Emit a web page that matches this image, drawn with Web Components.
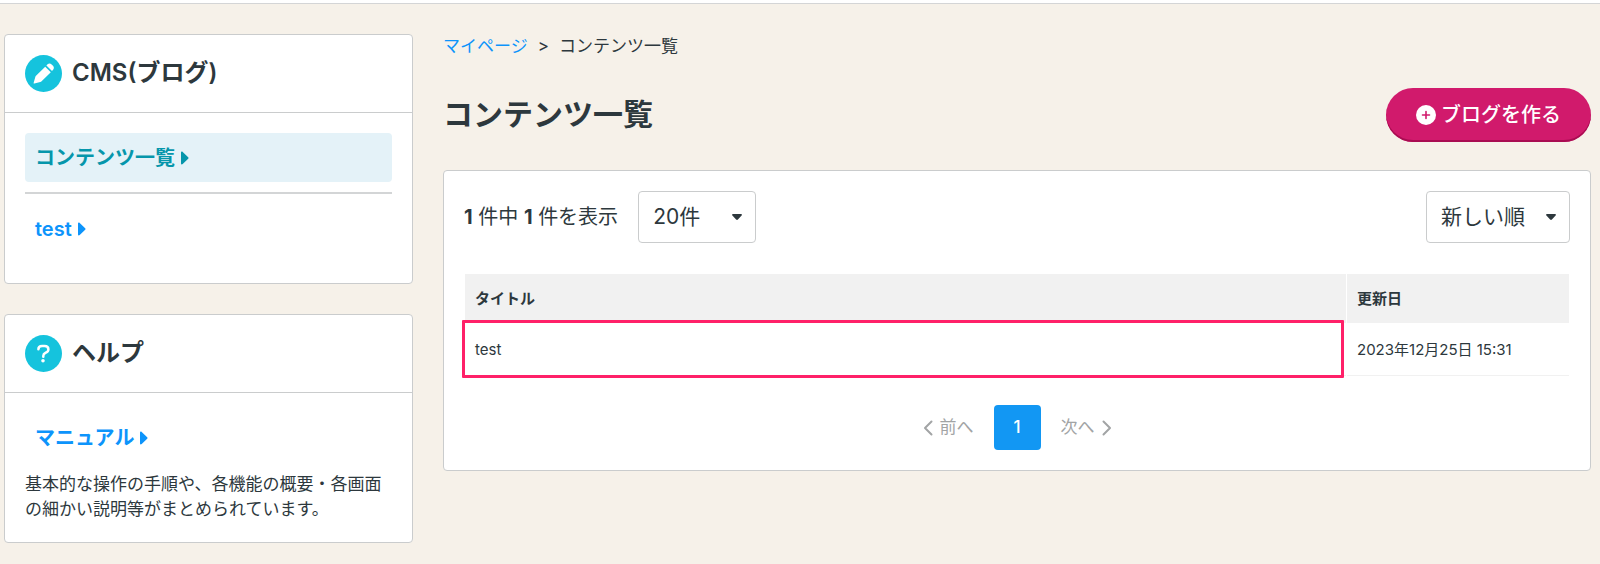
<!DOCTYPE html>
<html lang="ja">
<head>
<meta charset="utf-8">
<meta name="viewport" content="width=device-width, initial-scale=1">
<title>コンテンツ一覧</title>
<style>
body {
  margin: 0;
  background: #f6f1e9;
  color: #2d383d;
  font: 17px/25px Inter, "Noto Sans CJK JP", sans-serif;
  --line: #cacccd;
  --link: #0d94fb;
  --cyan: #15c3dd;
}
</style>
</head>
<body>
<cms-page>
  <side-card slot="side" icon="pencil" heading="CMS(ブログ)">
    <side-link href="#contents" current>コンテンツ一覧</side-link>
    <side-rule></side-rule>
    <side-link href="#test">test</side-link>
  </side-card>
  <side-card slot="side" icon="help" heading="ヘルプ">
    <side-link href="#manual">マニュアル</side-link>
    <side-text>基本的な操作の手順や、各機能の概要・各画面の細かい説明等がまとめられています。</side-text>
  </side-card>
  <bread-crumb parent="マイページ">コンテンツ一覧</bread-crumb>
  <page-title>コンテンツ一覧<round-button slot="action">ブログを作る</round-button></page-title>
  <content-panel></content-panel>
</cms-page>

<script>
const define = (name, markup, setup) => customElements.define(name, class extends HTMLElement {
  constructor() {
    super();
    const template = document.createElement('template');
    template.innerHTML = markup;
    this.attachShadow({ mode: 'open' }).append(template.content.cloneNode(true));
    if (setup) setup(this, this.shadowRoot);
  }
});

define('cms-page', `
<style>
  :host { display: block; }
  header { height: 3px; background: #fff; border-bottom: 1px solid #d4d5d6; }
  .columns { display: grid; grid-template-columns: minmax(240px, 409px) minmax(0, 1fr); gap: 30px; padding: 30px 9px 20px 4px; align-items: start; }
  aside { display: grid; gap: 30px; }
</style>
<header></header>
<div class="columns">
  <aside><slot name="side"></slot></aside>
  <main><slot></slot></main>
</div>`);

define('round-icon', `
<style>
  :host { display: block; width: 37px; height: 37px; }
  svg { display: none; width: 100%; height: 100%; }
  circle.disc { fill: var(--cyan); }
  :host([name="pencil"]) .pencil, :host([name="help"]) .help { display: block; }
</style>
<svg class="pencil" viewBox="0 0 37 37" aria-hidden="true">
  <circle class="disc" cx="18.5" cy="18.5" r="18.5"/>
  <path fill="#fff" d="M20.200 11.700l5.600 5.600-9.200 9c-.4.400-.8.600-1.300.8L9.300 28.600c-.500.100-.8-.2-.7-.7l1.700-5.900c.1-.5.4-.9.7-1.200zM21.400 10.500l1.200-1.200c1.200-1.200 2.900-1 4 .1l1.400 1.400c1.100 1.100 1.200 2.800.1 4L27 16.100z"/>
</svg>
<svg class="help" viewBox="0 0 37 37" aria-hidden="true">
  <circle class="disc" cx="18.5" cy="18.5" r="18.5"/>
  <path d="M13.400 14.300c0-2.200 1.500-3.300 3.600-3.300h2.600c2.300 0 3.800 1.500 3.800 3.400 0 1.800-1.200 2.600-2.600 3.300-1.500.8-2.500 1.500-2.500 3v1" fill="none" stroke="#fff" stroke-width="2.500" stroke-linecap="round" stroke-linejoin="round"/>
  <circle cx="18" cy="25.700" r="1.800" fill="#fff"/>
</svg>`);

define('side-card', `
<style>
  :host { display: block; background: #fff; border: 1px solid var(--line); border-radius: 4px; }
  header { display: flex; align-items: center; gap: 10px; padding: 20px; border-bottom: 1px solid var(--line); }
  h2 { margin: 0; font-size: 24px; line-height: 35px; padding-bottom: 2px; font-weight: 600; }
  .body { padding: 20px; }
</style>
<header><round-icon></round-icon><h2></h2></header>
<div class="body"><slot></slot></div>`, (host, root) => {
  root.querySelector('round-icon').setAttribute('name', host.getAttribute('icon'));
  root.querySelector('h2').textContent = host.getAttribute('heading');
});

define('side-link', `
<style>
  :host { display: block; margin-bottom: 10px; }
  a { display: flex; align-items: center; gap: 6px; padding: 11px 10px 9px; font-size: 20px; line-height: 29px; font-weight: 600; color: var(--link); text-decoration: none; border-radius: 4px; }
  :host([current]) a { background: #e4f2f8; color: #0596ab; }
  svg { width: 8px; height: 14px; margin-bottom: 2px; fill: currentColor; }
</style>
<a><slot></slot><svg viewBox="0 0 8 14" aria-hidden="true"><path d="M0 1.500C0 .4 1 .2 1.700.9l5.500 5.300c.5.500.5 1.100 0 1.600l-5.500 5.300C1 13.800 0 13.600 0 12.500z"/></svg></a>`,
(host, root) => { root.querySelector('a').href = host.getAttribute('href'); });

define('side-rule', `
<style>:host { display: block; } hr { margin: 0 0 10px; border: 0; border-top: 2px solid #d3d5d6; }</style><hr>`);

define('side-text', `
<style>:host { display: block; } p { margin: 0; }</style><p><slot></slot></p>`);

define('bread-crumb', `
<style>
  :host { display: block; }
  nav { display: flex; gap: 10px; }
  a { color: var(--link); text-decoration: none; }
</style>
<nav aria-label="パンくず"><a href="#mypage"></a><span>&gt;</span><span><slot></slot></span></nav>`,
(host, root) => { root.querySelector('a').textContent = host.getAttribute('parent'); });

define('page-title', `
<style>
  :host { display: flex; align-items: center; justify-content: space-between; margin: 29px 0 28px; }
  h1 { margin: 0; padding-bottom: 2px; font-size: 30px; line-height: 44px; font-weight: 700; }
</style>
<h1><slot></slot></h1><slot name="action"></slot>`);

define('round-button', `
<style>
  :host { display: block; }
  button { display: flex; align-items: center; gap: 5px; padding: 12px 30px; border: 0; border-radius: 27px; background: #d11a6c; box-shadow: inset 0 -2px #a90c52; color: #fff; font: 500 20px/30px Inter, "Noto Sans CJK JP", sans-serif; }
  svg { width: 20px; height: 20px; }
</style>
<button type="button"><svg viewBox="0 0 20 20" aria-hidden="true"><circle cx="10" cy="10" r="10" fill="#fff"/><path d="M10 6.500v7M6.500 10h7" stroke="#d11a6c" stroke-width="1.600" stroke-linecap="round"/></svg><slot></slot></button>`);

define('select-box', `
<style>
  :host { display: grid; align-items: center; }
  select, svg { grid-area: 1 / 1; }
  select { appearance: none; width: 100%; height: 52px; margin: 0; padding: 0 34px 0 14px; border: 1px solid var(--line); border-radius: 4px; background: #fff; color: inherit; font: 21px/30px Inter, "Noto Sans CJK JP", sans-serif; }
  svg { justify-self: end; width: 10px; height: 6px; margin-right: 14px; fill: #2d383d; pointer-events: none; }
</style>
<select><option></option></select>
<svg viewBox="0 0 10 6" aria-hidden="true"><path d="M1 0h8c1 0 1.200.9.600 1.500L5.900 5.500c-.5.600-1.200.6-1.800 0L.4 1.500C-.2.900 0 0 1 0z"/></svg>`,
(host, root) => {
  root.querySelector('option').textContent = host.getAttribute('value');
  root.querySelector('select').setAttribute('aria-label', host.getAttribute('label'));
});

define('content-table', `
<style>
  :host { display: block; }
  table { width: 100%; table-layout: fixed; border-spacing: 1px; font-size: 15px; line-height: 23px; }
  th, td { padding: 13px 10px; text-align: left; }
  th { background: #f1f1f1; font-weight: 700; }
  td { padding: 14px 10px; border-bottom: 1px solid #f1f1f1; }
  .date { width: 202px; }
  .marked { position: relative; }
  .marked::after { content: ""; position: absolute; inset: -4px 2px -3px -3px; border: 3px solid #ff2068; border-radius: 1px; }
</style>
<table>
  <thead><tr><th scope="col">タイトル</th><th scope="col" class="date">更新日</th></tr></thead>
  <tbody><tr><td class="marked">test</td><td>2023年12月25日 15:31</td></tr></tbody>
</table>`);

define('page-nav', `
<style>
  :host { display: block; }
  nav { display: flex; justify-content: center; align-items: center; gap: 20px; }
  button { display: flex; align-items: center; gap: 7px; padding: 0; border: 0; background: none; color: #a2a4a5; font: 17px/25px Inter, "Noto Sans CJK JP", sans-serif; }
  a { padding: 10px 0; width: 47px; text-align: center; border-radius: 4px; background: #1297f3; color: #fff; text-decoration: none; font-weight: 500; }
  svg { width: 10px; height: 16px; fill: none; stroke: currentColor; stroke-width: 2; stroke-linecap: round; stroke-linejoin: round; }
</style>
<nav aria-label="ページ送り">
  <button type="button" disabled><svg viewBox="0 0 10 16" aria-hidden="true"><path d="M8.500 1.500L2 8l6.500 6.500"/></svg>前へ</button>
  <a href="#page1" aria-current="page">1</a>
  <button type="button" disabled>次へ<svg viewBox="0 0 10 16" aria-hidden="true"><path d="M1.500 1.500L8 8l-6.500 6.500"/></svg></button>
</nav>`);

define('content-panel', `
<style>
  :host { display: block; background: #fff; border: 1px solid var(--line); border-radius: 4px; padding: 20px; }
  .bar { display: flex; align-items: center; gap: 20px; margin-bottom: 30px; font-size: 20px; line-height: 30px; }
  .size { width: 118px; }
  .sort { width: 144px; margin-left: auto; }
  page-nav { margin-top: 28px; }
</style>
<div class="bar">
  <span><b>1</b> 件中 <b>1</b> 件を表示</span>
  <select-box class="size" value="20件" label="表示件数"></select-box>
  <select-box class="sort" value="新しい順" label="並び順"></select-box>
</div>
<content-table></content-table>
<page-nav></page-nav>`);
</script>
</body>
</html>
